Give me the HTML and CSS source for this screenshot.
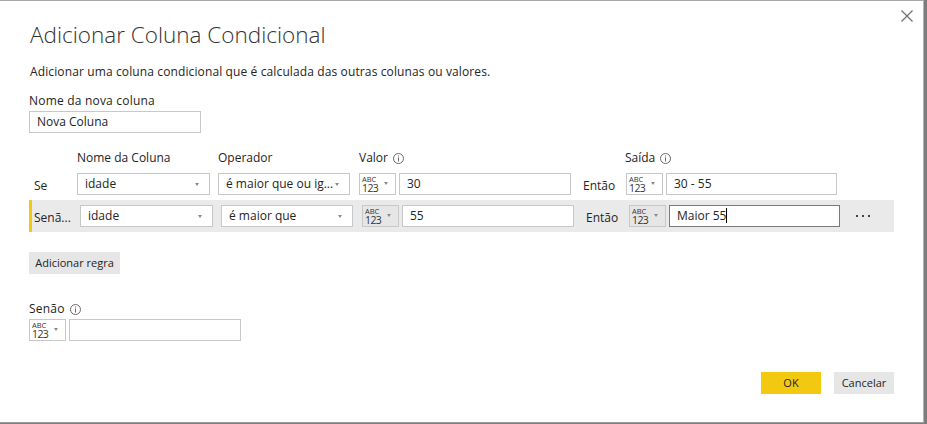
FILE: index.html
```html
<!DOCTYPE html>
<html lang="pt">
<head>
<meta charset="utf-8">
<title>Adicionar Coluna Condicional</title>
<link rel="stylesheet" href="styles.css">
</head>
<body>
<div class="dialog">
  <button class="close" aria-label="Fechar">
    <svg width="12" height="12" viewBox="0 0 12 12"><path d="M0.5 0.5 L11.5 11.5 M11.5 0.5 L0.5 11.5" stroke="#6b6b6b" stroke-width="1.1" fill="none"/></svg>
  </button>
  <h1 class="title">Adicionar Coluna Condicional</h1>
  <p class="desc">Adicionar uma coluna condicional que é calculada das outras colunas ou valores.</p>
  <div class="field-label">Nome da nova coluna</div>
  <div class="textbox name-box">Nova Coluna</div>

  <div class="rules">
    <div class="rule-head">
      <span class="c-label"></span>
      <span class="c-name">Nome da Coluna</span>
      <span class="c-op">Operador</span>
      <span class="c-val">Valor <svg class="info" width="11" height="11" viewBox="0 0 11 11"><circle cx="5.5" cy="5.5" r="5" stroke="#6b6b6b" fill="none"/><rect x="5" y="2.5" width="1" height="1" fill="#6b6b6b"/><rect x="5" y="4.5" width="1" height="4" fill="#6b6b6b"/></svg></span>
      <span class="c-then"></span>
      <span class="c-out">Saída <svg class="info" width="11" height="11" viewBox="0 0 11 11"><circle cx="5.5" cy="5.5" r="5" stroke="#6b6b6b" fill="none"/><rect x="5" y="2.5" width="1" height="1" fill="#6b6b6b"/><rect x="5" y="4.5" width="1" height="4" fill="#6b6b6b"/></svg></span>
    </div>

    <div class="rule">
      <span class="rule-label">Se</span>
      <div class="dropdown c-name"><span>idade</span><i class="caret"></i></div>
      <div class="dropdown c-op"><span>é maior que ou ig...</span><i class="caret"></i></div>
      <div class="type"><span class="abc">ABC</span><span class="num">123</span><i class="caret"></i></div>
      <div class="textbox c-input">30</div>
      <span class="then">Então</span>
      <div class="type"><span class="abc">ABC</span><span class="num">123</span><i class="caret"></i></div>
      <div class="textbox c-input">30 - 55</div>
    </div>

    <div class="rule active">
      <span class="rule-label">Senã...</span>
      <div class="dropdown c-name"><span>idade</span><i class="caret"></i></div>
      <div class="dropdown c-op"><span>é maior que</span><i class="caret"></i></div>
      <div class="type"><span class="abc">ABC</span><span class="num">123</span><i class="caret"></i></div>
      <div class="textbox c-input">55</div>
      <span class="then">Então</span>
      <div class="type"><span class="abc">ABC</span><span class="num">123</span><i class="caret"></i></div>
      <div class="textbox c-input focused">Maior 55<span class="cursor"></span></div>
      <span class="more"><b></b><b></b><b></b></span>
    </div>
  </div>

  <button class="btn add">Adicionar regra</button>

  <div class="field-label else-label">Senão <svg class="info" width="11" height="11" viewBox="0 0 11 11"><circle cx="5.5" cy="5.5" r="5" stroke="#6b6b6b" fill="none"/><rect x="5" y="2.5" width="1" height="1" fill="#6b6b6b"/><rect x="5" y="4.5" width="1" height="4" fill="#6b6b6b"/></svg></div>
  <div class="else-row">
    <div class="type"><span class="abc">ABC</span><span class="num">123</span><i class="caret"></i></div>
    <div class="textbox c-input"></div>
  </div>

  <div class="footer">
    <button class="btn ok">OK</button>
    <button class="btn cancel">Cancelar</button>
  </div>
</div>
</body>
</html>
```

FILE: styles.css
```css
* { box-sizing: border-box; }
html, body { margin: 0; padding: 0; }
body {
  width: 927px;
  height: 424px;
  background: #7d7d7d;
  font-family: "Open Sans", "Noto Sans", sans-serif;
  font-size: 12px;
  color: #252423;
  overflow: hidden;
}
.dialog {
  position: relative;
  width: 924px;
  height: 423px;
  background: #fff;
  border-top: 1px solid #a6a6a6;
  border-right: 1px solid #b4b4b4;
  border-bottom: 1px solid #9c9c9c;
  padding: 0 29px 0 29px;
  display: flex;
  flex-direction: column;
  align-items: flex-start;
}
.close {
  position: absolute;
  top: 8px;
  right: 9px;
  width: 14px;
  height: 14px;
  padding: 1px;
  border: 0;
  background: transparent;
  line-height: 0;
}
.title {
  margin: 19px 0 0 1px;
  font-size: 22.5px;
  font-weight: 300;
  line-height: 30px;
  color: #333;
}
.desc {
  margin: 14px 0 0 1px;
  line-height: 16px;
  letter-spacing: 0.12px;
}
.field-label {
  margin-top: 13px;
  line-height: 16px;
  display: flex;
  align-items: center;
  gap: 5px;
  letter-spacing: 0.2px;
}
.textbox {
  height: 22px;
  border: 1px solid #c8c8c8;
  background: #fff;
  line-height: 20px;
  padding: 0 7px;
  white-space: nowrap;
  overflow: hidden;
}
.name-box {
  margin-top: 2px;
  width: 172px;
}
.rules {
  width: 865px;
  margin-top: 17px;
}
.rule-head {
  display: flex;
  line-height: 16px;
  height: 16px;
}
.rule-head .c-label { width: 48px; }
.rule-head .c-name { width: 141px; }
.rule-head .c-op { width: 141px; }
.rule-head .c-val { width: 266px; }
.c-val, .c-out { display: flex; align-items: center; gap: 5px; }
.rule {
  display: flex;
  align-items: center;
  height: 22px;
  margin-top: 7px;
}
.rule.active {
  height: 32px;
  margin-top: 5px;
  background: #eaeaea;
  border-left: 3px solid #f2c811;
}
.rule-label {
  width: 48px;
  padding-left: 5px;
  padding-top: 3px;
  white-space: nowrap;
}
.active .rule-label { padding-left: 2px; }
.dropdown {
  position: relative;
  height: 22px;
  border: 1px solid #c8c8c8;
  background: #fff;
  line-height: 20px;
  padding: 0 7px;
  white-space: nowrap;
}
.dropdown.c-name { width: 133px; }
.dropdown.c-op { width: 132px; margin-left: 8px; }
.caret {
  position: absolute;
  right: 10px;
  top: 9px;
  width: 0;
  height: 0;
  border-left: 2.5px solid transparent;
  border-right: 2.5px solid transparent;
  border-top: 3px solid #8a8a8a;
}
.type {
  position: relative;
  width: 37px;
  height: 22px;
  border: 1px solid #c8c8c8;
  background: #fff;
  margin-left: 9px;
  padding: 2px 0 0 2px;
  display: flex;
  flex-direction: column;
  color: #333;
}
.type .caret { right: 7px; top: 8px; }
.active .type { background: #e6e6e6; }
.abc {
  font-size: 7.5px;
  line-height: 7px;
  letter-spacing: 0;
}
.num {
  font-size: 10.5px;
  line-height: 11px;
  letter-spacing: -0.6px;
}
.c-input {
  width: 172px;
  margin-left: 3px;
}
.then {
  width: 55px;
  padding-left: 12px;
  padding-top: 3px;
}
.then + .type { margin-left: 0; }
.rule .c-input:last-of-type { width: 171px; }
.focused { border-color: #7a7a7a; }
.cursor {
  display: inline-block;
  width: 1px;
  height: 15px;
  background: #000;
  vertical-align: -3px;
}
.more {
  display: flex;
  gap: 4px;
  margin-left: 16px;
}
.more b {
  width: 2px;
  height: 2px;
  background: #444;
}
.btn {
  font-family: inherit;
  font-size: 11px;
  color: #252423;
  border: 0;
  height: 22px;
  padding: 0;
  line-height: 22px;
  background: #e6e6e6;
}
.add {
  margin-top: 20px;
  width: 91px;
}
.else-label { margin-top: 27px; }
.else-row {
  display: flex;
  margin-top: 2px;
}
.else-row .type { margin-left: 0; }
.footer {
  margin-top: auto;
  margin-bottom: 28px;
  align-self: flex-end;
  display: flex;
  gap: 13px;
}
.footer .btn { width: 60px; }
.ok { background: #f2c811; }
```
